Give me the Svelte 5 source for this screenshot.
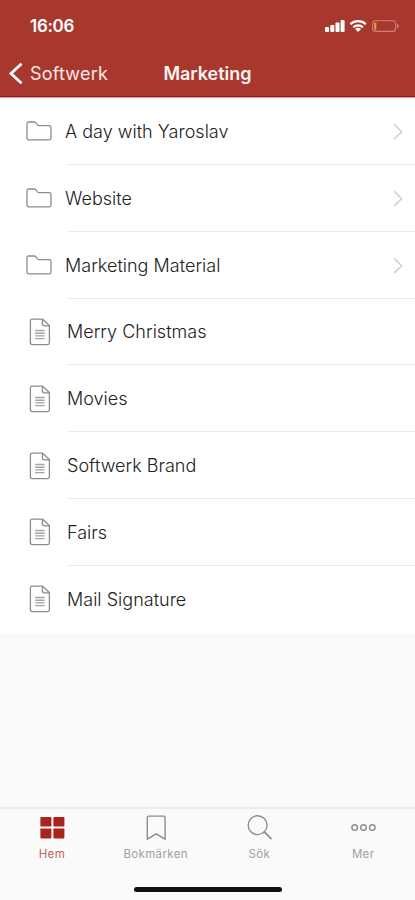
<script lang="ts">
    const items = [
        { name: "A day with Yaroslav", folder: true },
        { name: "Website", folder: true },
        { name: "Marketing Material", folder: true },
        { name: "Merry Christmas", folder: false },
        { name: "Movies", folder: false },
        { name: "Softwerk Brand", folder: false },
        { name: "Fairs", folder: false },
        { name: "Mail Signature", folder: false },
    ];

    const tabs = [
        { id: "home", label: "Hem" },
        { id: "bookmarks", label: "Bokmärken" },
        { id: "search", label: "Sök" },
        { id: "more", label: "Mer" },
    ];

    let activeTab = $state("home");
</script>

<div class="screen">
    <header>
        <div class="status-bar">
            <span class="time">16:06</span>
            <svg class="status-icons" width="76" height="16" viewBox="0 0 76 16">
                <g fill="#fff">
                    <rect x="1" y="9" width="4" height="5" rx="1" />
                    <rect x="6.3" y="7" width="4" height="7" rx="1" />
                    <rect x="11.5" y="4.5" width="4" height="9.5" rx="1" />
                    <rect x="16.6" y="2" width="4" height="12" rx="1" />
                </g>
                <g fill="none" stroke="#fff" stroke-width="2.2">
                    <path d="M26.4 6.2a11.3 11.3 0 0 1 15.4 0" />
                    <path d="M29.3 9.3a7.2 7.2 0 0 1 9.6 0" />
                </g>
                <path d="M31.2 11.1a4.4 4.4 0 0 1 5.8 0l-2.9 3z" fill="#fff" />
                <rect x="48.6" y="2.8" width="23" height="10.6" rx="3" fill="none" stroke="#cf8179" stroke-width="1.1" />
                <rect x="50.3" y="4.5" width="2" height="7.4" rx="0.8" fill="#eda13c" />
                <path d="M73 5.6q1.8 1 1.8 2.5t-1.8 2.5z" fill="#cf8179" />
            </svg>
        </div>
        <nav class="nav-bar">
            <button class="back">
                <svg width="15" height="24" viewBox="0 0 15 24">
                    <path d="M13.5 1.7 3 11.5 13.5 21.3" fill="none" stroke="#fff" stroke-width="2.8" />
                </svg>
                <span>Softwerk</span>
            </button>
            <h1>Marketing</h1>
        </nav>
    </header>

    <ul class="list">
        {#each items as item}
            <li class:folder={item.folder}>
                {#if item.folder}
                    <svg class="icon" width="26" height="20" viewBox="0 0 26 20">
                        <path
                            d="M1 16.4V2.6Q1 1 2.6 1h5.6q1 0 1.6.7l1.9 2.4q.5.5 1.3.5h10.3q1.7 0 1.7 1.7v10.8q0 1.7-1.7 1.7H2.7Q1 18.8 1 16.4z"
                            fill="none"
                            stroke="#8c8c8c"
                            stroke-width="1.3"
                        />
                    </svg>
                {:else}
                    <svg class="icon" width="22" height="28" viewBox="0 0 22 28">
                        <g fill="none" stroke="#8c8c8c" stroke-width="1.3">
                            <path d="M3.2 1.2h10.4l6.8 6.4v17.2q0 1.8-1.8 1.8H3.2q-1.8 0-1.8-1.8V3q0-1.8 1.8-1.8z" />
                            <path d="M13.4 1.4v4.4q0 2 2 2h4.8" />
                            <path d="M6.2 12.5h9.4M6.2 15.2h9.4M6.2 17.9h9.4M6.2 20.6h9.4" stroke="#a3a3a3" stroke-width="1.4" />
                        </g>
                    </svg>
                {/if}
                <div class="row">
                    <span class="name">{item.name}</span>
                    {#if item.folder}
                        <svg width="10" height="17" viewBox="0 0 10 17">
                            <path d="M1.2 1.3 8.6 8.7 1.2 16.1" fill="none" stroke="#d0d0d2" stroke-width="1.5" />
                        </svg>
                    {/if}
                </div>
            </li>
        {/each}
    </ul>

    <footer>
        <div class="tabs">
            {#each tabs as tab}
                <button class="tab" class:active={activeTab === tab.id} onclick={() => (activeTab = tab.id)}>
                    <svg width="28" height="28" viewBox="0 0 28 28">
                        {#if tab.id === "home"}
                            <g fill="currentColor">
                                <rect x="2.4" y="4" width="11" height="9.6" rx="0.8" />
                                <rect x="15.4" y="4" width="11" height="9.6" rx="0.8" />
                                <rect x="2.4" y="15.4" width="11" height="10" rx="0.8" />
                                <rect x="15.4" y="15.4" width="11" height="10" rx="0.8" />
                            </g>
                        {:else if tab.id === "bookmarks"}
                            <path d="M5.3 4.4q0-1.3 1.3-1.3h15.2q1.3 0 1.3 1.3v21.8l-8.9-5.4-8.9 5.4z" />
                        {:else if tab.id === "search"}
                            <circle cx="12.6" cy="12.2" r="9.4" />
                            <path d="M19.3 18.9l7.2 7.2" stroke-width="1.8" />
                        {:else}
                            <circle cx="5.7" cy="14.6" r="2.8" />
                            <circle cx="14.5" cy="14.6" r="2.8" />
                            <circle cx="23.3" cy="14.6" r="2.8" />
                        {/if}
                    </svg>
                    <span>{tab.label}</span>
                </button>
            {/each}
        </div>
        <div class="home-indicator"></div>
    </footer>
</div>

<style>
    :global(body) {
        margin: 0;
    }

    .screen {
        display: flex;
        flex-direction: column;
        width: 100%;
        height: 900px;
        overflow: hidden;
        background: #fafafa;
        font-family: Inter, "Liberation Sans", sans-serif;
    }

    button {
        padding: 0;
        border: none;
        background: none;
        font-family: inherit;
        cursor: pointer;
    }

    svg {
        display: block;
        flex-shrink: 0;
    }

    header {
        box-sizing: border-box;
        height: 98px;
        flex-shrink: 0;
        background: #a8382d;
        border-bottom: 1px solid #d5a09b;
        box-shadow: inset 0 -1px 0 #981c16;
        color: #fff;
    }

    .status-bar {
        display: flex;
        align-items: center;
        justify-content: space-between;
        height: 50px;
        padding: 2px 15px 0 30px;
        box-sizing: border-box;
    }

    .time {
        font-size: 17px;
        font-weight: 600;
        letter-spacing: -0.3px;
    }

    .nav-bar {
        display: grid;
        grid-template-columns: 1fr auto 1fr;
        align-items: center;
        height: 47px;
    }

    .back {
        display: flex;
        align-items: center;
        gap: 7px;
        padding-left: 8px;
        color: #fbe9e7;
        font-size: 18px;
        letter-spacing: 0.2px;
    }

    h1 {
        margin: 0;
        font-size: 18px;
        font-weight: 600;
        color: #fff3f1;
    }

    .list {
        margin: 0;
        padding: 0;
        list-style: none;
        background: #fff;
    }

    li {
        display: flex;
        align-items: center;
        height: 66.85px;
        padding-left: 29px;
    }

    li.folder {
        padding-left: 26px;
    }

    .row {
        display: flex;
        flex: 1;
        align-items: center;
        justify-content: space-between;
        height: 100%;
        box-sizing: border-box;
        margin-left: 16px;
        padding-top: 1px;
        padding-right: 12px;
        border-bottom: 1px solid #ebebeb;
    }

    li:last-child .row {
        border-bottom-color: transparent;
    }

    .folder .name {
        margin-left: -3px;
    }

    .name {
        color: #222;
        font-size: 18px;
        font-weight: 360;
        letter-spacing: 0.02px;
    }

    footer {
        margin-top: auto;
        height: 93px;
        box-sizing: border-box;
        border-top: 2px solid #ececec;
    }

    .tabs {
        display: grid;
        grid-template-columns: repeat(4, 1fr);
        height: 79px;
    }

    .tab {
        display: flex;
        flex-direction: column;
        align-items: center;
        padding-top: 4px;
        color: #a0a0a0;
        font-size: 11.5px;
        letter-spacing: 0.35px;
    }

    .tab svg {
        fill: none;
        stroke: #8e8e8e;
        stroke-width: 1.4;
    }

    .tab span {
        margin-top: 6px;
    }

    .tab.active {
        color: #c4625c;
    }

    .tab.active svg {
        color: #a8241c;
        stroke: none;
    }

    .home-indicator {
        width: 148px;
        height: 5px;
        margin: -1px auto 0;
        border-radius: 3px;
        background: #111;
    }
</style>
